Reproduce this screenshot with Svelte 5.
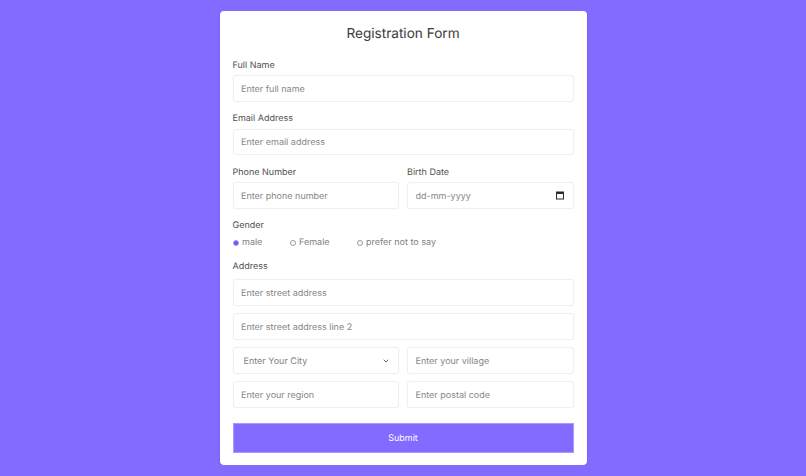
<script>
  const radios = [
    { label: 'male', checked: true },
    { label: 'Female', checked: false },
    { label: 'prefer not to say', checked: false }
  ];
</script>

<main class="page">
  <form class="card">
    <h1>Registration Form</h1>

    <div class="field">
      <label for="name">Full Name</label>
      <input id="name" placeholder="Enter full name" />
    </div>
    <div class="field">
      <label for="email">Email Address</label>
      <input id="email" placeholder="Enter email address" />
    </div>
    <div class="cols">
      <div class="field">
        <label for="phone">Phone Number</label>
        <input id="phone" placeholder="Enter phone number" />
      </div>
      <div class="field">
        <label for="birth">Birth Date</label>
        <div class="control">
          <input id="birth" class="date" placeholder="dd-mm-yyyy" />
          <svg class="cal" width="10" height="10" viewBox="0 0 10 10" aria-hidden="true">
            <path d="M1 1.5h8v8H1z M2 4v4.5h6V4z" fill="#2b2b2b" fill-rule="evenodd" />
          </svg>
        </div>
      </div>
    </div>

    <div class="gender">
      <span class="label">Gender</span>
      <div class="radios">
        {#each radios as r}
          <label class="radio">
            <input type="radio" name="gender" checked={r.checked} />
            <span>{r.label}</span>
          </label>
        {/each}
      </div>
    </div>

    <div class="address">
      <label for="street">Address</label>
      <input id="street" placeholder="Enter street address" />
      <input placeholder="Enter street address line 2" />
      <div class="cols">
        <div class="control">
          <select><option>Enter Your City</option></select>
          <svg class="chev" width="6" height="4" viewBox="0 0 6 4" aria-hidden="true">
            <path d="M.7.8 3 3l2.3-2.2" fill="none" stroke="#666" stroke-width="1" />
          </svg>
        </div>
        <input placeholder="Enter your village" />
      </div>
      <div class="cols">
        <input placeholder="Enter your region" />
        <input placeholder="Enter postal code" />
      </div>
    </div>

    <button type="button">Submit</button>
  </form>
</main>

<style>
  :global(body) {
    margin: 0;
    background: #836bff;
  }
  .page {
    display: flex;
    justify-content: center;
    padding-top: 10.5px;
    font-family: Inter, "Open Sans", sans-serif;
    color: #444;
    text-rendering: geometricPrecision;
  }
  .card {
    box-sizing: border-box;
    width: 367px;
    height: 454.8px;
    padding: 14.5px 13px 0;
    background: #fff;
    border-radius: 4px;
    box-shadow: 0 1px 2px rgba(40, 20, 120, 0.25);
  }
  h1 {
    margin: 0 0 15.5px;
    font-size: 13.6px;
    line-height: 18px;
    font-weight: 400;
    text-align: center;
    color: #3c3c3c;
    text-rendering: geometricPrecision;
  }
  label, .label {
    display: block;
  }
  .field > label, .label, .address > label {
    font-size: 9px;
    line-height: 12px;
    color: #4f4f4f;
    padding-top: 2px;
    margin-top: -1px;
    margin-bottom: 3.8px;
  }
  .cols .field > label {
    padding-top: 3px;
    margin-bottom: 2.8px;
  }
  .field { margin-bottom: 10.4px; min-width: 0; }
  input:not([type="radio"]), select {
    display: block;
    box-sizing: border-box;
    width: 100%;
    height: 26.3px;
    padding: 1.5px 7.5px 0;
    border: 1px solid #f0f0f4;
    border-radius: 3px;
    background: #fff;
    font-family: inherit;
    font-size: 9px;
    color: #808080;
    outline: none;
    box-shadow: 0 0 1px rgba(60, 50, 120, 0.08);
    text-rendering: geometricPrecision;
  }
  input::placeholder { color: #868686; opacity: 1; }
  select {
    appearance: none;
    padding-left: 10px;
  }
  .cols { display: grid; grid-template-columns: 1fr 1fr; gap: 8px; }
  .control { position: relative; min-width: 0; }
  .cal { position: absolute; right: 9px; top: 8px; }
  .chev { position: absolute; right: 10px; top: 12px; }
  .gender .label { margin-bottom: 5px; }
  .radios { display: flex; height: 12px; margin-bottom: 11px; }
  .radio {
    display: flex;
    align-items: center;
    gap: 3px;
    font-size: 9px;
    color: #808080;
  }
  .radio:nth-child(1) { width: 57px; }
  .radio:nth-child(2) { width: 67px; }
  .radio input {
    appearance: none;
    box-sizing: border-box;
    width: 6.5px;
    height: 6.5px;
    margin: 0;
    border: 1px solid #999;
    border-radius: 50%;
    background: #fff;
  }
  .radio input:checked {
    border-color: #a796ff;
    background: #6f52ed;
  }
  .address { display: flex; flex-direction: column; gap: 7.7px; }
  .address > label { margin-bottom: -1.4px; }
  button {
    display: block;
    box-sizing: border-box;
    width: 100%;
    height: 29.4px;
    margin-top: 15.7px;
    padding-top: 3px;
    border: 1px solid #a898ff;
    background: #836bff;
    color: #fff;
    font-family: inherit;
    font-size: 9px;
    text-rendering: geometricPrecision;
  }
</style>
